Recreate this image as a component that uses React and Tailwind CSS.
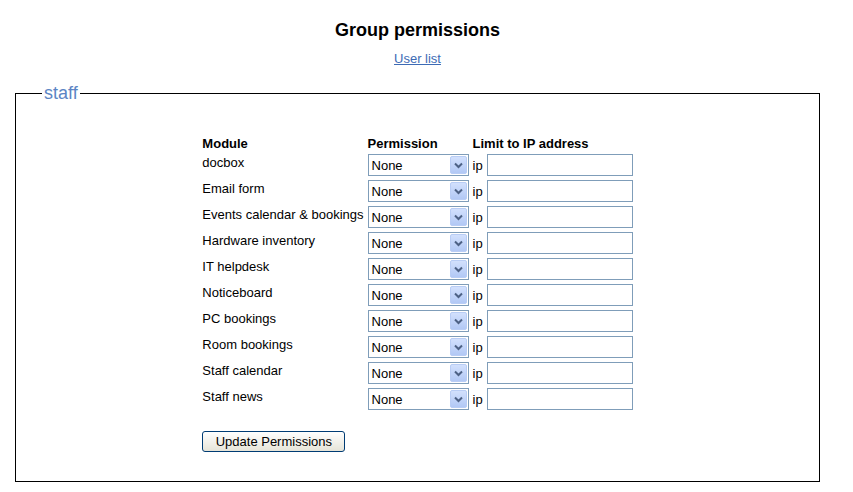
import React from 'react';

const modules = [
  'docbox',
  'Email form',
  'Events calendar & bookings',
  'Hardware inventory',
  'IT helpdesk',
  'Noticeboard',
  'PC bookings',
  'Room bookings',
  'Staff calendar',
  'Staff news',
];

// XP style dropdown, drawn by hand so it looks the same everywhere
const PermissionSelect = () => (
  <div className="flex items-center w-[101px] h-[22px] border border-[#7f9db9] bg-white">
    <span className="flex-grow pl-[3px] text-[13px] leading-none text-black">None</span>
    <span className="w-[17px] h-[18px] mr-[1px] flex items-center justify-center rounded-[2px] border border-[#b9cdf5] bg-gradient-to-b from-[#d2e0fd] to-[#b2c8f5]">
      <svg width="9" height="7" viewBox="0 0 9 7">
        <path d="M1 1.5 L4.5 5 L8 1.5" fill="none" stroke="#4d6185" strokeWidth="2" />
      </svg>
    </span>
  </div>
);

export default function App() {
  return (
    <div className="w-[835px] bg-white text-black font-['Liberation_Sans',Arial,sans-serif]">
      {/* --- Cabecera --- */}
      <h1 className="pt-[19px] text-center text-[18px] font-bold leading-[22px]">Group permissions</h1>
      <div className="mt-[10px] text-center text-[13px] leading-[15px]">
        <a href="#" className="text-[#3d6bb5] underline">User list</a>
      </div>

      {/* --- Grupo --- */}
      <fieldset className="mx-[15px] mt-[17px] border border-black pb-[27px]">
        <legend className="ml-[26px] px-[2px] text-[18px] leading-[20px] text-[#5b85c4]">staff</legend>

        <table className="mx-auto mt-[31px] border-collapse text-[13px] leading-[15px]">
          <thead>
            <tr>
              <th className="p-[2px] pb-[1px] text-left font-bold">Module</th>
              <th className="p-[2px] pb-[1px] text-left font-bold">Permission</th>
              <th className="p-[2px] pb-[1px] text-left font-bold">Limit to IP address</th>
            </tr>
          </thead>
          <tbody>
            {modules.map((m) => (
              <tr key={m}>
                <td className="p-[2px] pt-[3px] align-top whitespace-nowrap">{m}</td>
                <td className="p-[2px] align-top">
                  <PermissionSelect />
                </td>
                <td className="p-[2px] align-top">
                  <div className="flex items-center h-[22px]">
                    <span className="mr-[4px]">ip</span>
                    <input type="text" className="w-[146px] h-[22px] border border-[#7f9db9] bg-white px-[2px] text-[13px]" />
                  </div>
                </td>
              </tr>
            ))}
            <tr>
              <td colSpan={3} className="p-[2px] pt-[19px]">
                <button className="h-[21px] w-[143px] rounded-[3px] border border-[#003c74] bg-gradient-to-b from-[#ffffff] to-[#e6e4d8] text-[13px] leading-none text-black">
                  Update Permissions
                </button>
              </td>
            </tr>
          </tbody>
        </table>
      </fieldset>
    </div>
  );
}
